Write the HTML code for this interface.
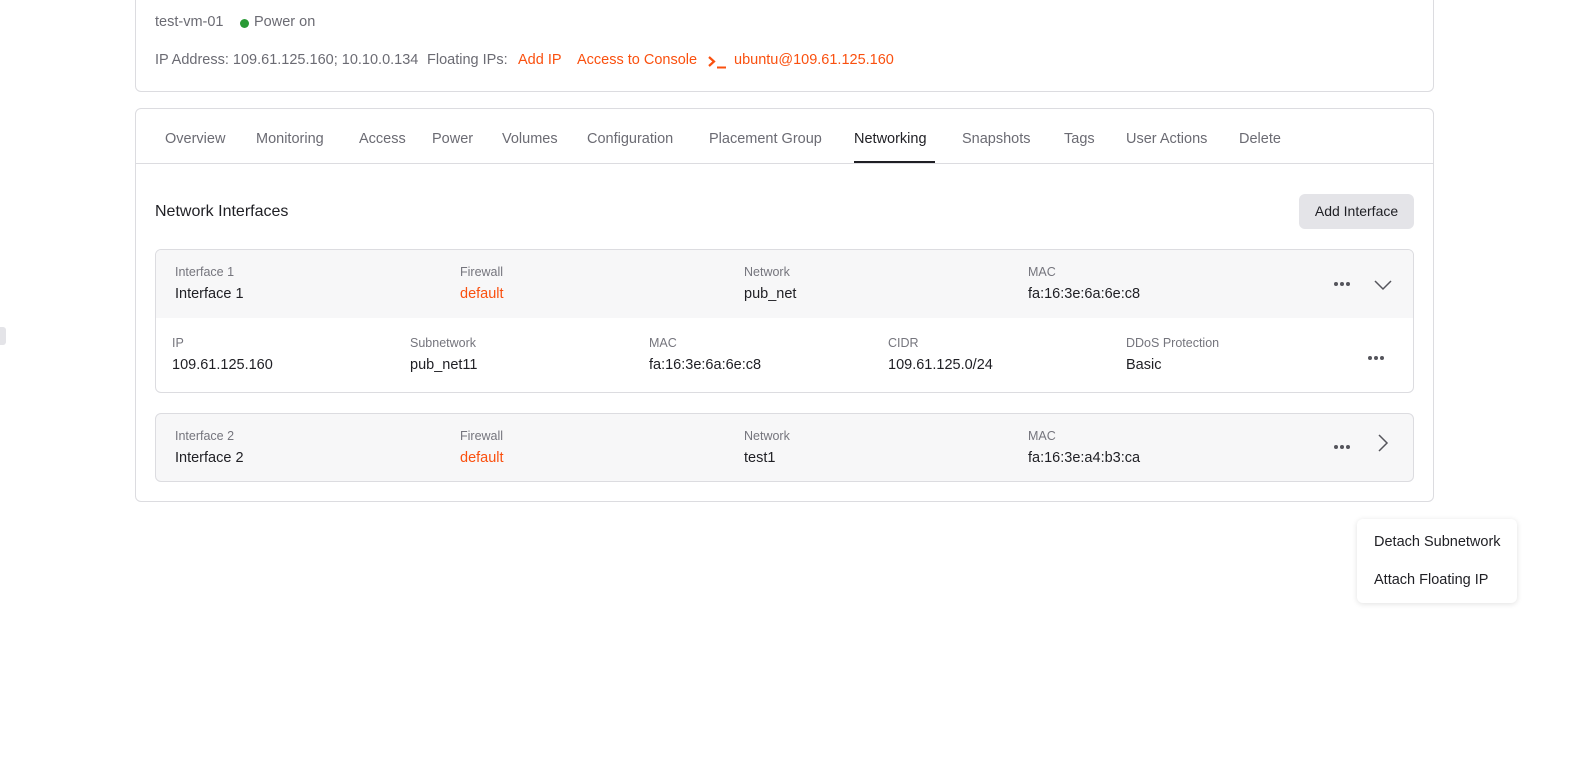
<!DOCTYPE html>
<html><head><meta charset="utf-8"><style>
*{margin:0;padding:0;box-sizing:border-box}
body{width:1593px;height:781px;background:#fff;font-family:"Liberation Sans","Noto Sans CJK SC",sans-serif;color:#1f1f24;position:relative;overflow:hidden;font-size:14.5px}
.a{position:absolute;white-space:nowrap}
.g{color:#6b6b73}
.o{color:#fa500f}
.l{font-size:12.5px;color:#75757d}
.card{position:absolute;border:1px solid #dcdce0;border-radius:6px;background:#fff}
.dots{position:absolute;width:18px;height:4px}
.dots i{position:absolute;top:0;width:4px;height:4px;border-radius:2px;background:#55555c}
</style></head><body>
<div class="card" style="left:135px;top:-10px;width:1299px;height:102px"></div>
<div class="a g" style="left:155px;top:14px">test-vm-01</div>
<div class="a" style="left:240px;top:19px;width:9px;height:9px;border-radius:50%;background:#2a9a36"></div>
<div class="a g" style="left:254px;top:14px">Power on</div>
<div class="a g" style="left:155px;top:52px">IP Address: 109.61.125.160; 10.10.0.134</div>
<div class="a g" style="left:427px;top:52px">Floating IPs:</div>
<div class="a o" style="left:518px;top:52px">Add IP</div>
<div class="a o" style="left:577px;top:52px">Access to Console</div>
<svg class="a" style="left:708px;top:55px" width="20" height="14"><path d="M1 2 L6 6.5 L1 11" stroke="#fa500f" stroke-width="2.2" fill="none"/><path d="M9 12.5 H18" stroke="#fa500f" stroke-width="2"/></svg>
<div class="a o" style="left:734px;top:52px">ubuntu@109.61.125.160</div>

<div class="card" style="left:135px;top:108px;width:1299px;height:394px"></div>
<div class="a" style="left:136px;top:163px;width:1297px;height:1px;background:#dcdce0"></div>
<div class="a g" style="left:165px;top:131px">Overview</div>
<div class="a g" style="left:256px;top:131px">Monitoring</div>
<div class="a g" style="left:359px;top:131px">Access</div>
<div class="a g" style="left:432px;top:131px">Power</div>
<div class="a g" style="left:502px;top:131px">Volumes</div>
<div class="a g" style="left:587px;top:131px">Configuration</div>
<div class="a g" style="left:709px;top:131px">Placement Group</div>
<div class="a" style="left:854px;top:131px">Networking</div>
<div class="a" style="left:854px;top:161px;width:81px;height:2px;background:#1f1f24"></div>
<div class="a g" style="left:962px;top:131px">Snapshots</div>
<div class="a g" style="left:1064px;top:131px">Tags</div>
<div class="a g" style="left:1126px;top:131px">User Actions</div>
<div class="a g" style="left:1239px;top:131px">Delete</div>

<div class="a" style="left:155px;top:203px;font-size:16px">Network Interfaces</div>
<div class="a" style="left:1299px;top:194px;width:115px;height:35px;border-radius:6px;background:#e4e4e8;text-align:center;line-height:35px;font-size:14px">Add Interface</div>

<div class="card" style="left:155px;top:249px;width:1259px;height:144px;overflow:hidden"><div style="height:68px;background:#f7f7f8"></div></div>
<div class="a l" style="left:175px;top:265px">Interface 1</div><div class="a" style="left:175px;top:286px">Interface 1</div>
<div class="a l" style="left:460px;top:265px">Firewall</div><div class="a o" style="left:460px;top:286px">default</div>
<div class="a l" style="left:744px;top:265px">Network</div><div class="a" style="left:744px;top:286px">pub_net</div>
<div class="a l" style="left:1028px;top:265px">MAC</div><div class="a" style="left:1028px;top:286px">fa:16:3e:6a:6e:c8</div>
<div class="dots" style="left:1334px;top:282px"><i style="left:0"></i><i style="left:6px"></i><i style="left:12px"></i></div>
<svg class="a" style="left:1374px;top:279px" width="18" height="12"><path d="M1 2 L9 10 L17 2" stroke="#55555c" stroke-width="1.5" fill="none"/></svg>
<div class="a l" style="left:172px;top:336px">IP</div><div class="a" style="left:172px;top:357px">109.61.125.160</div>
<div class="a l" style="left:410px;top:336px">Subnetwork</div><div class="a" style="left:410px;top:357px">pub_net11</div>
<div class="a l" style="left:649px;top:336px">MAC</div><div class="a" style="left:649px;top:357px">fa:16:3e:6a:6e:c8</div>
<div class="a l" style="left:888px;top:336px">CIDR</div><div class="a" style="left:888px;top:357px">109.61.125.0/24</div>
<div class="a l" style="left:1126px;top:336px">DDoS Protection</div><div class="a" style="left:1126px;top:357px">Basic</div>
<div class="dots" style="left:1368px;top:356px"><i style="left:0"></i><i style="left:6px"></i><i style="left:12px"></i></div>

<div class="card" style="left:155px;top:413px;width:1259px;height:69px;background:#f7f7f8"></div>
<div class="a l" style="left:175px;top:429px">Interface 2</div><div class="a" style="left:175px;top:450px">Interface 2</div>
<div class="a l" style="left:460px;top:429px">Firewall</div><div class="a o" style="left:460px;top:450px">default</div>
<div class="a l" style="left:744px;top:429px">Network</div><div class="a" style="left:744px;top:450px">test1</div>
<div class="a l" style="left:1028px;top:429px">MAC</div><div class="a" style="left:1028px;top:450px">fa:16:3e:a4:b3:ca</div>
<div class="dots" style="left:1334px;top:445px"><i style="left:0"></i><i style="left:6px"></i><i style="left:12px"></i></div>
<svg class="a" style="left:1377px;top:434px" width="12" height="18"><path d="M2 1 L10 9 L2 17" stroke="#55555c" stroke-width="1.5" fill="none"/></svg>

<div class="a" style="left:0;top:327px;width:6px;height:18px;background:#e4e4e8;border-radius:0 3px 3px 0"></div>

<div class="a" style="left:1357px;top:519px;width:160px;height:84px;border-radius:6px;background:#fff;box-shadow:0 1px 6px rgba(0,0,0,.12)"></div>
<div class="a" style="left:1374px;top:534px">Detach Subnetwork</div>
<div class="a" style="left:1374px;top:572px">Attach Floating IP</div>
</body></html>
